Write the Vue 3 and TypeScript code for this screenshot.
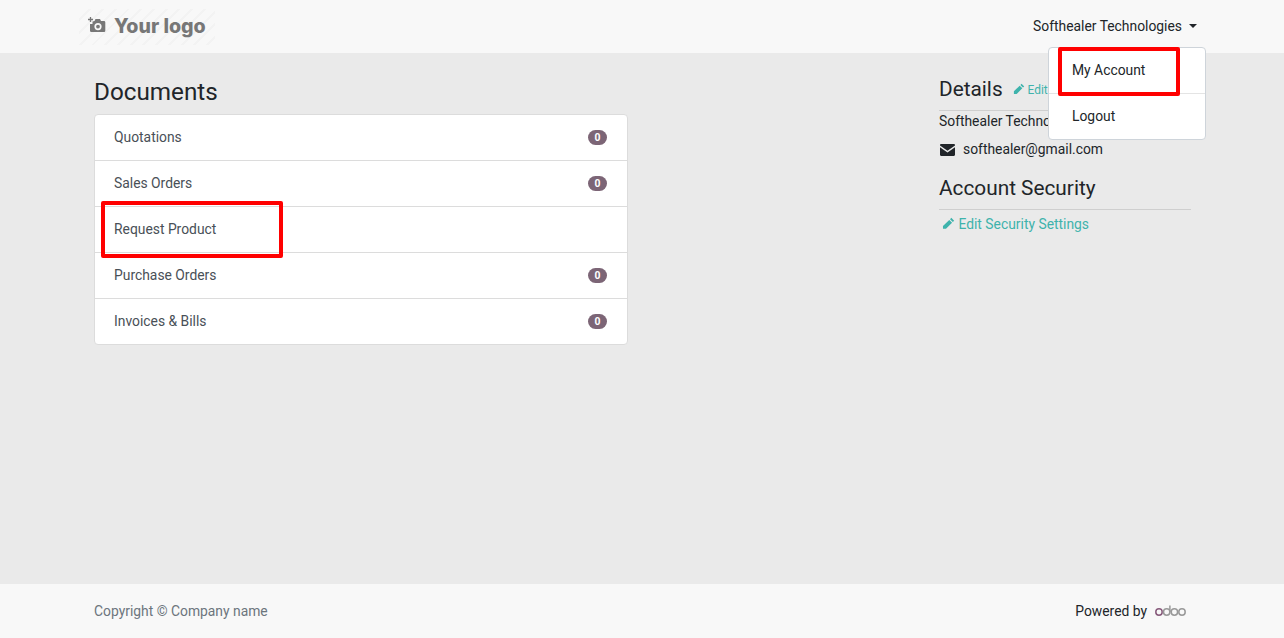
<script setup lang="ts">
interface Doc { label: string; count: number | null }
const docs: Doc[] = [
  { label: 'Quotations', count: 0 },
  { label: 'Sales Orders', count: 0 },
  { label: 'Request Product', count: null },
  { label: 'Purchase Orders', count: 0 },
  { label: 'Invoices & Bills', count: 0 },
]
</script>

<template>
  <div class="page">
    <header class="topbar">
      <div class="logo">
        <svg class="cam" width="18" height="18" viewBox="0 0 18 18">
          <path d="M0 3.500h5M2.500 1v5" stroke="#777" stroke-width="1.300" fill="none" />
          <path fill="#777" fill-rule="evenodd" d="M6.500 5l1-2h4.500l1 2h3a1.300 1.300 0 0 1 1.300 1.300v8.400A1.300 1.300 0 0 1 16.500 16H3.300A1.300 1.300 0 0 1 2 14.700V8h2.500V5.500zM10 7a3.600 3.600 0 1 0 0 7.200A3.600 3.600 0 0 0 10 7zm0 1.700a1.900 1.900 0 1 1 0 3.800 1.900 1.900 0 0 1 0-3.800z" />
        </svg>
        <span class="logo-text">Your logo</span>
      </div>
      <div class="user">
        <span>Softhealer Technologies</span>
        <i class="caret"></i>
        <div class="menu">
          <a class="menu-item first">My Account</a>
          <a class="menu-item">Logout</a>
          <div class="mark mark-account"></div>
        </div>
      </div>
    </header>

    <main class="content">
      <section class="docs">
        <h3 class="docs-title">Documents</h3>
        <div class="list">
          <div v-for="d in docs" :key="d.label" class="row">
            <span>{{ d.label }}</span>
            <span v-if="d.count !== null" class="badge">{{ d.count }}</span>
          </div>
          <div class="mark mark-request"></div>
        </div>
      </section>
      <aside class="side">
        <div class="heading details">
          <span class="h-text">Details</span>
          <a class="edit small">
            <svg width="12" height="12" viewBox="0 0 12 12"><path fill="#3eb3ac" d="M8.600.8l2.600 2.600-1.200 1.200-2.600-2.600zM6.700 2.700l2.600 2.600-5.600 5.600H.9V8.300z" /></svg>
            Edit
          </a>
        </div>
        <div class="company">Softhealer Technologies</div>
        <div class="email">
          <svg width="15" height="12" viewBox="0 0 15 12"><path fill="#212529" d="M1.200 0h12.600c.7 0 1.200.5 1.200 1.200v.4L7.500 6.800 0 1.600v-.4C0 .5.500 0 1.200 0zM0 3.200l7.500 5.200L15 3.200v7.600c0 .7-.5 1.200-1.200 1.200H1.200C.5 12 0 11.500 0 10.800z" /></svg>
          <span>softhealer@gmail.com</span>
        </div>
        <div class="heading security">
          <span class="h-text">Account Security</span>
        </div>
        <a class="edit sec-link">
          <svg width="13" height="13" viewBox="0 0 12 12"><path fill="#3eb3ac" d="M8.600.8l2.600 2.600-1.200 1.200-2.600-2.600zM6.700 2.700l2.600 2.600-5.600 5.600H.9V8.300z" /></svg>
          Edit Security Settings
        </a>
      </aside>
    </main>

    <footer class="footer">
      <span class="copy">Copyright © Company name</span>
      <span class="powered">
        Powered by
        <svg class="odoo" width="32" height="13" viewBox="0 0 32 13" fill="none" stroke-width="1.500">
          <circle cx="4" cy="8" r="3.200" stroke="#875a7b" />
          <circle cx="11.700" cy="8" r="3.200" stroke="#999" />
          <path d="M14.900 1.500V8" stroke="#999" />
          <circle cx="19.400" cy="8" r="3.200" stroke="#999" />
          <circle cx="27" cy="8" r="3.200" stroke="#999" />
        </svg>
      </span>
    </footer>
  </div>
</template>

<style>
html, body { margin: 0; padding: 0; }
</style>

<style scoped>
.page {
  height: 638px;
  display: flex;
  flex-direction: column;
  background: #eaeaea;
  font-family: Roboto, "Liberation Sans", sans-serif;
  font-size: 13.860px;
  line-height: 21px;
  color: #212529;
  overflow: hidden;
}
.topbar {
  height: 53px;
  flex: none;
  box-sizing: border-box;
  background: #f8f8f8;
  display: flex;
  align-items: center;
  justify-content: space-between;
  padding: 0 87px 0 79px;
}
.logo {
  width: 136px;
  height: 36px;
  display: flex;
  align-items: center;
  gap: 8px;
  padding-left: 9px;
  box-sizing: border-box;
  background: repeating-linear-gradient(135deg, #f8f8f8 0 7px, #f3f3f3 7px 9px);
}
.cam { margin-top: -3px; flex: none; }
.logo-text {
  font-family: Inter, sans-serif;
  font-weight: 800;
  font-size: 19.600px;
  color: #777;
  white-space: nowrap;
}
.user {
  position: relative;
  display: flex;
  align-items: center;
  gap: 7px;
}
.caret {
  width: 0;
  height: 0;
  border-left: 4px solid transparent;
  border-right: 4px solid transparent;
  border-top: 4px solid #212529;
  margin-top: -1px;
}
.menu {
  position: absolute;
  top: 31px;
  right: -9px;
  width: 158px;
  height: 93px;
  box-sizing: border-box;
  background: #fff;
  border: 1px solid #ced4da;
  border-radius: 4px;
  z-index: 2;
}
.menu-item {
  display: block;
  height: 46px;
  box-sizing: border-box;
  padding: 12px 0 0 23px;
}
.menu-item.first { border-bottom: 1px solid #e4e4e4; }
.mark {
  position: absolute;
  box-sizing: border-box;
  border: 4px solid #f00;
  border-radius: 2px;
}
.mark-account { left: 9px; top: -1px; width: 122px; height: 49px; }
.mark-request { left: 6px; top: 86px; width: 182px; height: 57px; }
.content {
  flex: 1;
  display: flex;
  justify-content: space-between;
  padding: 0 93px 0 94px;
  min-height: 0;
}
.docs { width: 534px; }
.docs-title {
  margin: 24px 0 8px;
  font-size: 24.260px;
  line-height: 29px;
  font-weight: 400;
}
.list {
  position: relative;
  background: #fff;
  border: 1px solid #dcdcdc;
  border-radius: 4px;
}
.row {
  height: 46px;
  box-sizing: border-box;
  padding: 0 20px 0 19px;
  display: flex;
  align-items: center;
  justify-content: space-between;
  color: #495057;
  border-bottom: 1px solid #dcdcdc;
}
.row:nth-last-child(2) { border-bottom: 0; height: 45px; }
.badge {
  min-width: 19px;
  height: 15px;
  box-sizing: border-box;
  border-radius: 8px;
  background: #7c6576;
  color: #fff;
  font-size: 10.400px;
  font-weight: 700;
  line-height: 15px;
  text-align: center;
}
.side { width: 252px; }
.heading {
  display: flex;
  align-items: baseline;
  border-bottom: 1px solid #cfcfcf;
}
.h-text { font-size: 20.800px; line-height: 25px; }
.details { margin-top: 24px; gap: 10px; height: 33px; }
.company { height: 21px; white-space: nowrap; }
.email {
  margin-top: 7px;
  display: flex;
  align-items: center;
  gap: 8px;
  padding-left: 1px;
  height: 21px;
}
.security { margin-top: 16px; padding-bottom: 8px; }
.edit { color: #3eb3ac; }
.edit svg { vertical-align: -1px; }
.small { font-size: 11.900px; position: relative; top: -2px; }
.sec-link { display: block; margin-top: 4px; padding-left: 3px; }
.footer {
  height: 54px;
  flex: none;
  box-sizing: border-box;
  background: #f8f8f8;
  padding: 0 97px 0 94px;
  display: flex;
  align-items: center;
  justify-content: space-between;
}
.copy { color: #6c757d; }
.powered { display: flex; align-items: center; gap: 8px; }
.odoo { margin-top: -1px; }
</style>
